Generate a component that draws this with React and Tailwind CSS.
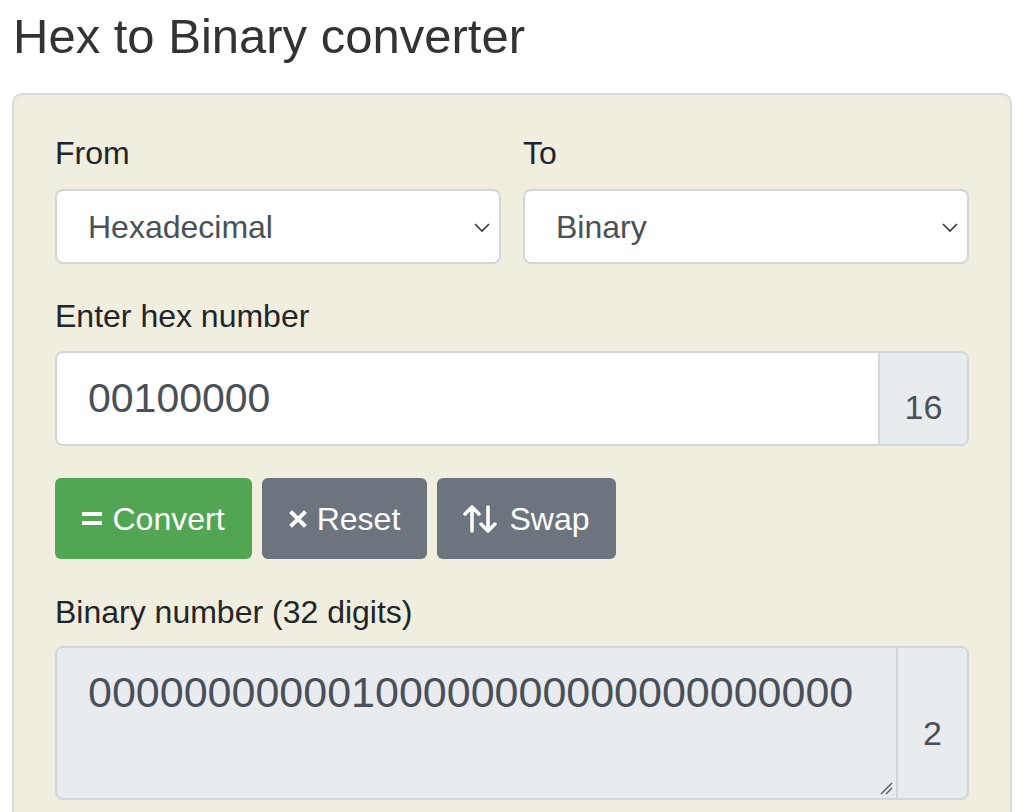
export default function App() {
  const font = { fontFamily: '"Liberation Sans", Arial, sans-serif' };
  return (
    <div className="w-[1024px] h-[812px] overflow-hidden bg-white" style={font}>
      <h1 className="pl-[13px] pt-[10px] text-[49px] leading-[52px] text-[#333]">Hex to Binary converter</h1>
      <div className="mx-[12px] mt-[31px] rounded-[10px] border-2 border-[#dcdcd6] bg-[#f0eedf] px-[41px] pt-[38px] pb-[40px]">
        <div className="grid grid-cols-2 gap-x-[22px]">
          <div>
            <div className="text-[32px] leading-[40px] text-[#212529] mb-[16px] pt-[2px] -mt-[2px]">From</div>
            <div className="relative flex h-[75px] items-center rounded-[8px] border-2 border-[#d3d6da] bg-white pl-[31px] text-[32px] text-[#495057]">
              Hexadecimal
              <svg className="absolute right-[8px] top-[30px]" width="18" height="12" viewBox="0 0 18 12" fill="none" stroke="#343a40" strokeWidth="1.6"><path d="M2 3l7 7 7-7" /></svg>
            </div>
          </div>
          <div>
            <div className="text-[32px] leading-[40px] text-[#212529] mb-[16px] pt-[2px] -mt-[2px]">To</div>
            <div className="relative flex h-[75px] items-center rounded-[8px] border-2 border-[#d3d6da] bg-white pl-[31px] text-[32px] text-[#495057]">
              Binary
              <svg className="absolute right-[8px] top-[30px]" width="18" height="12" viewBox="0 0 18 12" fill="none" stroke="#343a40" strokeWidth="1.6"><path d="M2 3l7 7 7-7" /></svg>
            </div>
          </div>
        </div>
        <div className="mt-[32px] text-[32px] leading-[40px] text-[#212529] mb-[15px]">Enter hex number</div>
        <div className="flex h-[95px] rounded-[8px] border-2 border-[#d3d6da] overflow-hidden">
          <div className="flex flex-1 items-center bg-white pl-[31px] text-[41px] text-[#495057]">00100000</div>
          <div className="flex w-[89px] items-center justify-center border-l-2 border-[#d3d6da] bg-[#e9ecef] pt-[18px] text-[34px] text-[#495057]">16</div>
        </div>
        <div className="mt-[32px] flex gap-[10px]">
          <div className="flex h-[81px] w-[197px] items-center justify-center rounded-[6px] bg-[#52a653] text-[32px] text-white">
            <span className="mr-[10px] flex flex-col gap-[5px]"><span className="block h-[4px] w-[20px] bg-white"></span><span className="block h-[4px] w-[20px] bg-white"></span></span>
            Convert
          </div>
          <div className="flex h-[81px] w-[165px] items-center justify-center rounded-[6px] bg-[#6c757d] text-[32px] text-white">
            <svg className="mr-[10px]" width="18" height="18" viewBox="0 0 18 18" stroke="white" strokeWidth="4" strokeLinecap="square"><path d="M3 3l12 12M15 3L3 15" /></svg>
            Reset
          </div>
          <div className="flex h-[81px] w-[179px] items-center justify-center rounded-[6px] bg-[#6c757d] text-[32px] text-white">
            <svg className="mr-[12px]" width="34" height="30" viewBox="0 0 34 30" fill="none" stroke="white" strokeWidth="3.5" strokeLinecap="round" strokeLinejoin="round"><path d="M9 27V3M2 10l7-7 7 7M25 3v24M18 20l7 7 7-7" /></svg>
            Swap
          </div>
        </div>
        <div className="mt-[33px] text-[32px] leading-[40px] text-[#212529] mb-[14px]">Binary number (32 digits)</div>
        <div className="flex h-[154px] rounded-[8px] border-2 border-[#d3d6da] overflow-hidden bg-[#e9ecef]">
          <div className="relative flex-1 pl-[31px] pt-[19px] text-[43px] leading-[50px] text-[#495057]">
            00000000000100000000000000000000
            <svg className="absolute right-[3px] bottom-[3px]" width="14" height="14" viewBox="0 0 14 14" stroke="#555" strokeWidth="1.4"><path d="M2 13L13 2M7 13l6-6" /></svg>
          </div>
          <div className="flex w-[71px] items-center justify-center border-l-2 border-[#d3d6da] pt-[20px] text-[34px] text-[#495057]">2</div>
        </div>
      </div>
    </div>
  );
}
